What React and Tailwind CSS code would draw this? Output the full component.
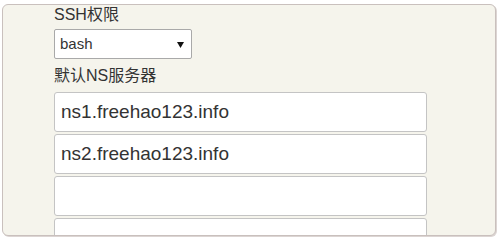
const NS_SERVERS = ["ns1.freehao123.info", "ns2.freehao123.info", "", ""];

const FONT = { fontFamily: '"Liberation Sans", "Noto Sans CJK SC", sans-serif' };

function FakeSelect({ value }) {
  return (
    <div className="flex h-[30px] w-[138px] items-center justify-between rounded-[2px] border border-[#a9a9a9] bg-white pl-[5px] pr-[7px] text-[15px] text-[#333]">
      <span>{value}</span>
      <svg width="7" height="6" viewBox="0 0 7 6" className="mt-[1px]">
        <path d="M0 0 H7 L3.5 6 Z" fill="#111" />
      </svg>
    </div>
  );
}

export default function App() {
  return (
    <div className="h-[240px] w-[500px] bg-white pl-[2px] pt-[4px]" style={FONT}>
      <div className="h-[232px] w-[494px] overflow-hidden rounded-[6px] border border-[#c9c0bd] bg-[#f5f4ec] pl-[51px] shadow-[1px_1px_0_#dcd5d3]">
        <div className="h-[20px] text-[16px] leading-[20px] text-[#333]">SSH权限</div>
        <div className="mt-[4px]">
          <FakeSelect value="bash" />
        </div>
        <div className="mt-[7px] h-[20px] text-[16px] leading-[20px] text-[#333]">默认NS服务器</div>
        <div className="mt-[6px] flex flex-col gap-[2px]">
          {NS_SERVERS.map((server, i) => (
            <div
              key={i}
              className="flex h-[40px] w-[373px] shrink-0 items-center rounded-[3px] border border-[#c4c4c4] bg-white px-[6px] text-[19px] text-[#333]"
            >
              {server}
            </div>
          ))}
        </div>
      </div>
    </div>
  );
}
